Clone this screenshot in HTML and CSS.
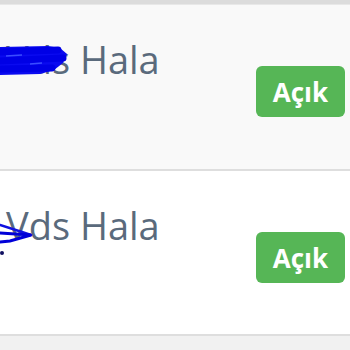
FILE: index.html
```html
<!DOCTYPE html>
<html lang="tr">
<head>
<meta charset="utf-8">
<link rel="stylesheet" href="styles.css">
</head>
<body>
<div class="topbar"></div>
<div class="list">
  <div class="row row-alt">
    <div class="name">Vds Hala</div>
    <div class="btn">Açık</div>
    <svg class="scribble s1" width="80" height="40" viewBox="0 0 80 40">
      <path d="M0 4 L48 3 L60 5 L67 11 L63 20 L54 27 L40 31 L0 32 Z" fill="#0a0af0"/>
      <path d="M0 9 L58 7 M0 18 L63 15 M0 26 L52 25" stroke="#0000e6" stroke-width="7" fill="none" stroke-linecap="round"/>
      <path d="M6 13 L22 12 M30 21 L42 20" stroke="#3a4dff" stroke-width="1.5" fill="none"/>
    </svg>
  </div>
  <div class="row">
    <div class="name">Vds Hala</div>
    <div class="btn">Açık</div>
    <svg class="scribble s2" width="40" height="50" viewBox="0 0 40 50">
      <path d="M0 12 L22 19 L31 22" stroke="#1010e0" stroke-width="2.5" fill="none" stroke-linecap="round"/>
      <path d="M0 20 L31 22 L10 28 L0 29" stroke="#0000d8" stroke-width="3" fill="none" stroke-linecap="round"/>
      <circle cx="2" cy="40" r="2" fill="#101060"/>
    </svg>
  </div>
</div>
</body>
</html>
```

FILE: styles.css
```css
html, body {
  margin: 0;
  padding: 0;
  background: #f1f1f1;
}
body {
  font-family: "Open Sans", "DejaVu Sans", sans-serif;
}
.topbar {
  height: 4px;
  background: #dcdcdc;
  border-bottom: 1px solid #e8e8e8;
}
.list {
  display: flex;
  flex-direction: column;
}
.row {
  position: relative;
  display: flex;
  justify-content: space-between;
  align-items: flex-start;
  height: 165px;
  box-sizing: border-box;
  padding: 32px 5px 0 6px;
  background: #ffffff;
  border-bottom: 2px solid #dedede;
}
.row-alt {
  background: #f9f9f9;
  height: 166px;
}
.name {
  font-size: 38px;
  line-height: 44px;
  color: #5a6a7c;
}
.btn {
  margin-top: 29px;
  width: 89px;
  height: 51px;
  box-sizing: border-box;
  border-radius: 6px;
  background: #56b656;
  color: #ffffff;
  font-weight: 700;
  font-size: 26px;
  display: flex;
  align-items: center;
  justify-content: center;
}
.scribble {
  position: absolute;
  left: 0;
}
.s1 {
  top: 38px;
}
.s2 {
  top: 42px;
}
```
